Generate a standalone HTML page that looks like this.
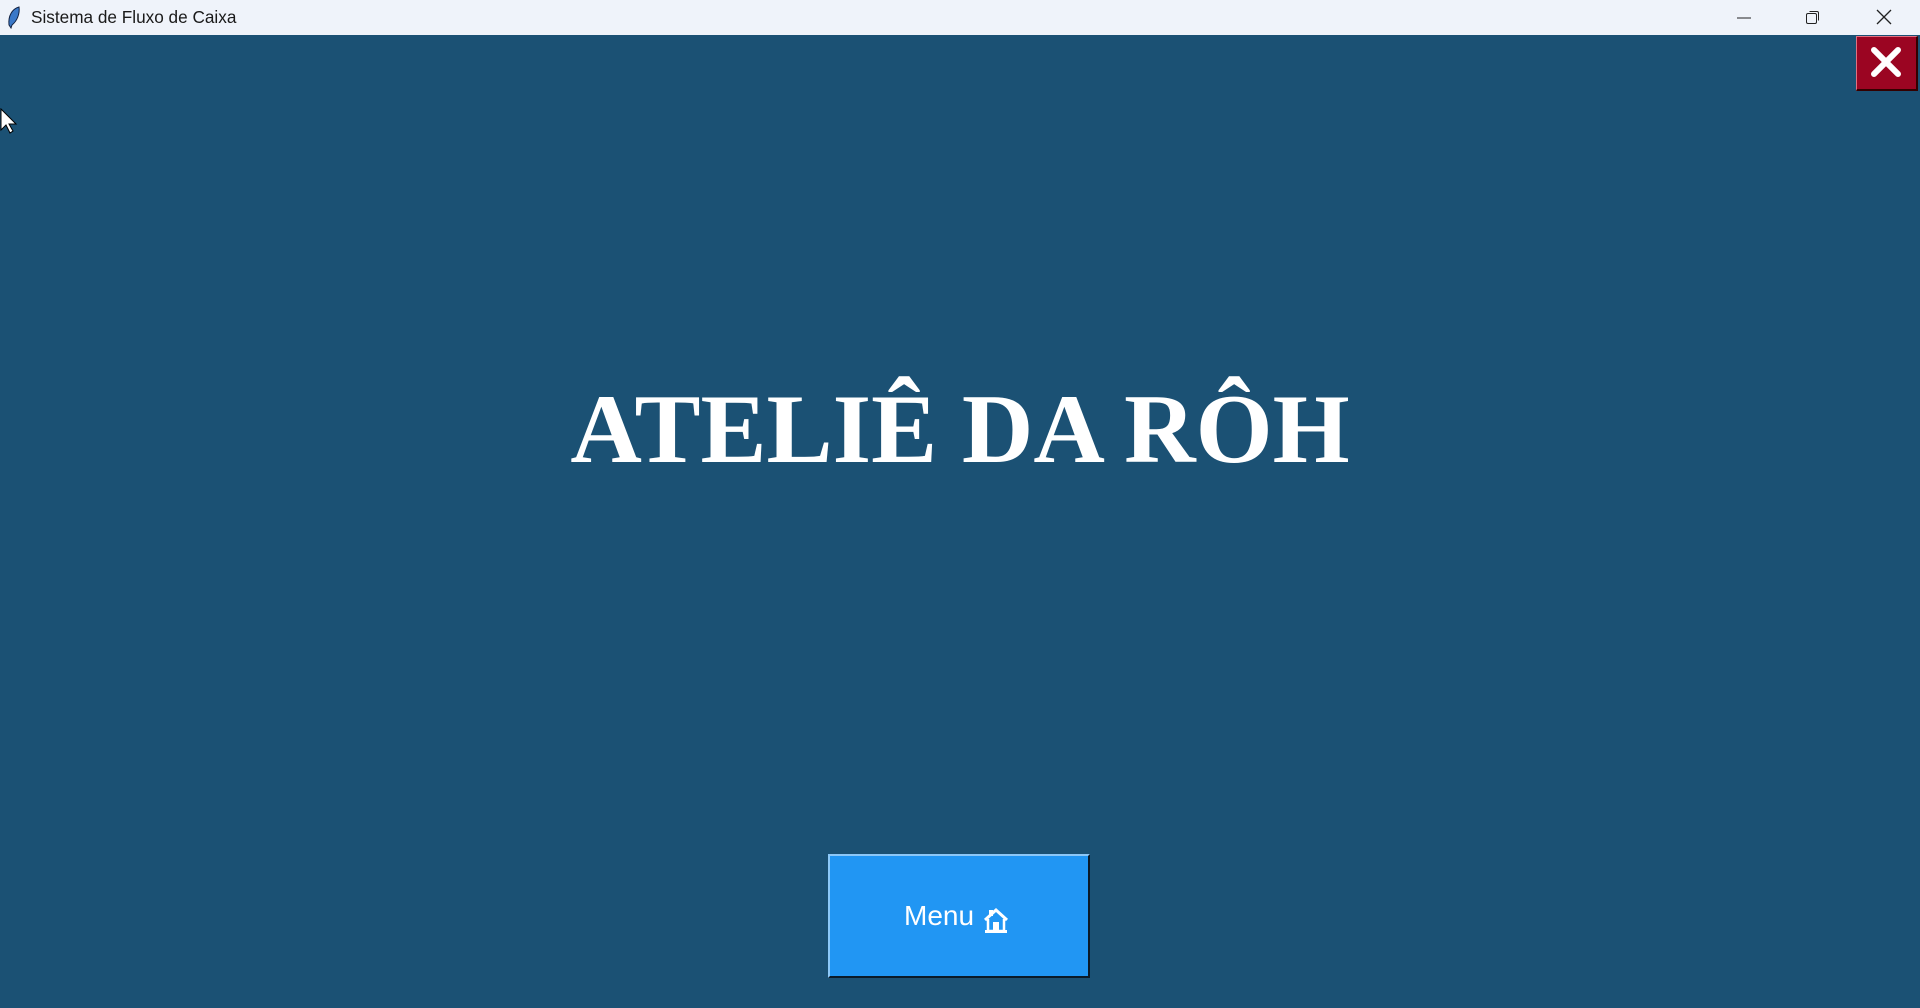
<!DOCTYPE html>
<html><head><meta charset="utf-8"><style>
html,body{margin:0;padding:0;width:1920px;height:1008px;overflow:hidden;background:#1b5174;font-family:"Liberation Sans",sans-serif}
#tb{position:absolute;left:0;top:0;width:1920px;height:35px;background:#eff3fa;}
#tb .t{position:absolute;left:31px;top:7px;font-size:17.2px;color:#1a1a1a;font-family:"Liberation Sans","DejaVu Sans",sans-serif}
#title{position:absolute;left:0;width:1920px;top:380px;text-align:center;font-family:"Liberation Serif",serif;font-weight:bold;font-size:99px;color:#fff;line-height:100px}
#close{position:absolute;left:1856px;top:36px;width:62px;height:55px;background:#9b0522;border-top:1px solid #e07080;border-left:1px solid #e07080;border-right:2px solid #300;border-bottom:2px solid #300;box-sizing:border-box}
#menu{position:absolute;left:828px;top:854px;width:262px;height:124px;background:#2196f3;box-sizing:border-box;border-top:2px solid #8cc8f8;border-left:2px solid #8cc8f8;border-right:2px solid #0a1a28;border-bottom:2px solid #0a1a28}
#menu .l{position:absolute;left:74px;top:44px;font-size:28px;color:#fff}
</style></head><body>
<div id="tb">
<svg style="position:absolute;left:6px;top:6px" width="16" height="24" viewBox="0 0 16 24"><path d="M13 1 C6 3 2 10 3 19 L5 22 L6 19 C11 15 14 8 13 1Z" fill="#3a78c8" stroke="#102040" stroke-width="1"/></svg>
<div class="t">Sistema de Fluxo de Caixa</div>
<svg style="position:absolute;left:1736px;top:10px" width="16" height="16"><line x1="1" y1="8" x2="15" y2="8" stroke="#222" stroke-width="1"/></svg>
<svg style="position:absolute;left:1805px;top:9px" width="16" height="16"><rect x="1.5" y="4.5" width="10" height="10" rx="1.5" fill="none" stroke="#222"/><path d="M4.5 2.5 H12 a1.5 1.5 0 0 1 1.5 1.5 V11.5" fill="none" stroke="#222"/></svg>
<svg style="position:absolute;left:1875px;top:8px" width="18" height="18"><path d="M2 2 L16 16 M16 2 L2 16" stroke="#222" stroke-width="1.3"/></svg>
</div>
<div id="close"><svg width="60" height="53" viewBox="0 0 60 53"><path d="M17 13 L41 37 M41 13 L17 37" stroke="#fff" stroke-width="6" stroke-linecap="round"/></svg></div>
<svg style="position:absolute;left:0;top:108px" width="18" height="26" viewBox="0 0 18 26"><path d="M1 1 L1 22 L6 17 L10 25 L13 23 L9 16 L16 16 Z" fill="#fff" stroke="#000" stroke-width="1"/></svg>
<div id="title">ATELIÊ DA RÔH</div>
<div id="menu"><span class="l">Menu</span>
<svg style="position:absolute;left:152px;top:50px" width="28" height="28" viewBox="0 0 28 28"><path d="M3 14 L14 4 L25 14" fill="none" stroke="#fff" stroke-width="3"/><path d="M6 13 V25 H22 V13" fill="none" stroke="#fff" stroke-width="2.5"/><rect x="11" y="16" width="6" height="9" fill="#fff"/><rect x="7" y="4" width="4" height="6" fill="#fff"/><rect x="3" y="24" width="22" height="3" fill="#fff"/></svg>
</div>
</body></html>
